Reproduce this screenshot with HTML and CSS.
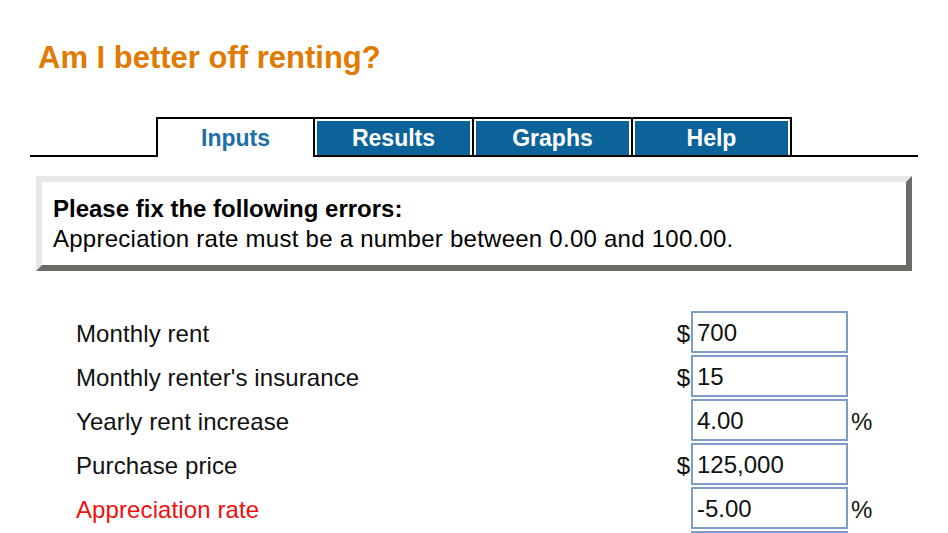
FILE: index.html
```html
<!DOCTYPE html>
<html>
<head>
<meta charset="utf-8">
<title>Am I better off renting?</title>
<link rel="stylesheet" href="styles.css">
</head>
<body>
<h1 class="title">Am I better off renting?</h1>

<div class="tabbar">
  <div class="tab tab-active">Inputs</div>
  <div class="tab">Results</div>
  <div class="tab">Graphs</div>
  <div class="tab">Help</div>
</div>

<div class="errors">
  <div class="errors-head">Please fix the following errors:</div>
  <div class="errors-msg">Appreciation rate must be a number between 0.00 and 100.00.</div>
</div>

<div class="form">
  <div class="label">Monthly rent</div>
  <div class="pre">$</div>
  <input class="field" type="text" value="700">
  <div class="post"></div>

  <div class="label">Monthly renter's insurance</div>
  <div class="pre">$</div>
  <input class="field" type="text" value="15">
  <div class="post"></div>

  <div class="label">Yearly rent increase</div>
  <div class="pre"></div>
  <input class="field" type="text" value="4.00">
  <div class="post">%</div>

  <div class="label">Purchase price</div>
  <div class="pre">$</div>
  <input class="field" type="text" value="125,000">
  <div class="post"></div>

  <div class="label label-error">Appreciation rate</div>
  <div class="pre"></div>
  <input class="field" type="text" value="-5.00">
  <div class="post">%</div>

  <div class="label"></div>
  <div class="pre"></div>
  <input class="field" type="text" value="">
  <div class="post"></div>
</div>
</body>
</html>
```

FILE: styles.css
```css
html, body {
  margin: 0;
  padding: 0;
  background: #fff;
}

body {
  font-family: "Liberation Sans", Arial, sans-serif;
  font-size: 24px;
  color: #111;
  overflow: hidden;
}

.title {
  margin: 40px 0 0 38px;
  font-size: 31px;
  line-height: 36px;
  font-weight: bold;
  color: #e27a00;
}

.tabbar {
  display: flex;
  margin: 41px 30px 0 30px;
  padding-left: 126px;
  border-bottom: 2px solid #000;
  height: 38px;
}

.tab {
  box-sizing: border-box;
  width: 159px;
  height: 38px;
  border-top: 2px solid #000;
  border-right: 2px solid #000;
  background: #0c6399;
  box-shadow: inset 2px 2px 0 #fff, inset -2px 0 0 #fff;
  color: #fff;
  font-weight: bold;
  font-size: 23px;
  display: flex;
  align-items: center;
  justify-content: center;
  padding-top: 2px;
}

.tab-active {
  border-left: 2px solid #000;
  background: #fff;
  box-shadow: none;
  color: #1d6fa6;
  height: 40px;
  margin-bottom: -2px;
  padding-bottom: 2px;
}

.errors {
  box-sizing: border-box;
  margin: 19px 0 0 36px;
  width: 876px;
  border-style: solid;
  border-width: 6px;
  border-color: #e8e8e6 #6b6b67 #6b6b67 #e8e8e6;
  background: #fff;
  padding: 12px 11px 11px 11px;
  line-height: 30px;
  color: #000;
}

.errors-head {
  font-weight: bold;
}

.errors-msg {
  letter-spacing: 0.25px;
}

.form {
  display: grid;
  grid-template-columns: 600px 15px 157px 24px;
  grid-auto-rows: 42px;
  row-gap: 2px;
  align-items: center;
  margin: 40px 0 0 76px;
}

.label {
  color: #111;
  padding-top: 3px;
  letter-spacing: 0.1px;
}

.label-error {
  color: #f01010;
}

.pre {
  text-align: right;
  padding-right: 1px;
  padding-top: 3px;
}

.post {
  padding-left: 3px;
  padding-top: 3px;
}

.field {
  box-sizing: border-box;
  width: 157px;
  height: 42px;
  margin: 0;
  border: 2px solid #7c9dc6;
  padding: 2px 4px 0 4px;
  font-family: "Liberation Sans", Arial, sans-serif;
  font-size: 24px;
  color: #111;
  background: #fff;
  outline: none;
}
```
